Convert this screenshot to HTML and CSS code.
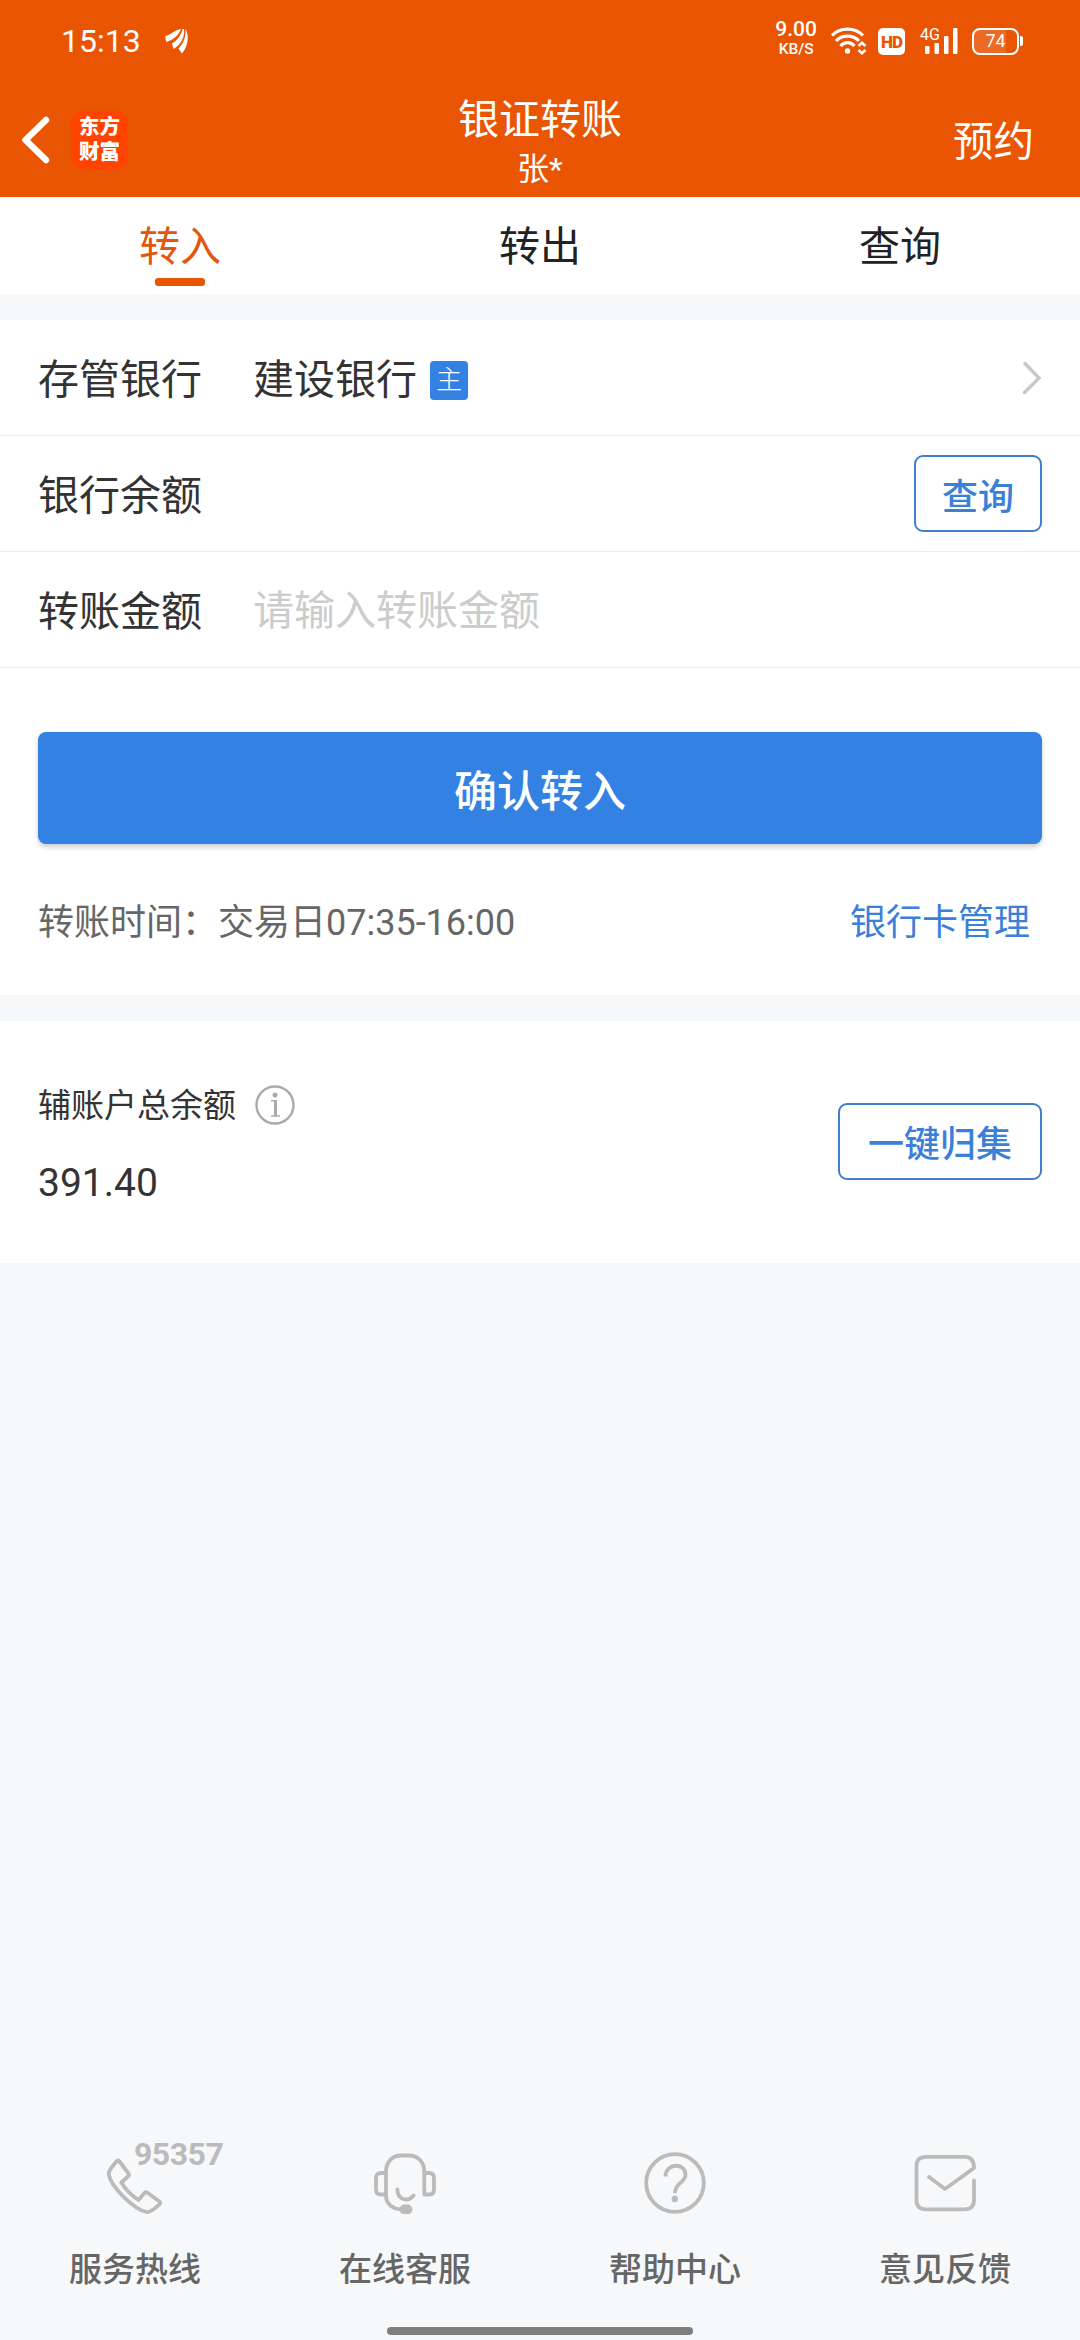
FILE: index.html
```html
<!DOCTYPE html>
<html lang="zh-CN">
<head>
  <meta charset="UTF-8">
  <meta name="viewport" content="width=device-width, initial-scale=1.0">
  <title>银证转账</title>
  <link rel="stylesheet" href="styles.css">
</head>
<body>
  <header>
    <!-- Status bar -->
    <div class="status">
      <span class="time">15:13</span>
      <svg class="app-mark" width="24" height="26" viewBox="0 0 24 26" fill="#fff">
        <path d="M0.500 8C6 7 10 1.500 16 1C14 7 8 12 1.500 14Q0 11 0.500 8Z"/>
        <path d="M7 15.500C13 12 16.500 6 17.500 1H19C20 9 16 17 8.500 21Z"/>
        <path d="M20.500 1C24.500 8 23 18 17 25.500L13.500 20.500C19 15 21 8 20.500 1Z"/>
      </svg>
      <div class="speed"><b>9.00</b><span>KB/S</span></div>
      <svg class="wifi" width="36" height="28" viewBox="0 0 36 28" fill="none" stroke="#fff" stroke-width="3.200">
        <path d="M1 8.500C9 0 24 0 32 8.500M5 14C11 7.500 22 7.500 28 14M9.500 19C13.500 14.500 19.500 14.500 23.500 19"/>
        <circle cx="16.500" cy="24" r="2.700" fill="#fff" stroke="none"/>
        <path d="M27.500 19L31 15.800L34.500 19M27.500 23L31 26.200L34.500 23" stroke-width="2.500"/>
      </svg>
      <span class="hd">HD</span>
      <div class="signal">
        <span>4G</span>
        <svg width="38" height="26" viewBox="0 0 38 26" fill="#fff">
          <rect x="5" y="18" width="4.500" height="8" rx="1"/>
          <rect x="14.500" y="15" width="4.500" height="11" rx="1"/>
          <rect x="24" y="8" width="4.500" height="18" rx="1"/>
          <rect x="33" y="0" width="4.500" height="26" rx="1"/>
        </svg>
      </div>
      <div class="battery"><span>74</span></div>
    </div>
    <!-- Title bar -->
    <div class="navbar">
      <div class="nav-left">
        <svg width="30" height="50" viewBox="0 0 30 50" fill="none" stroke="#fff" stroke-width="6.500" stroke-linejoin="round" stroke-linecap="round">
          <path d="M25 5L4.500 25L25 45"/>
        </svg>
        <div class="logo">东方<br>财富</div>
      </div>
      <div class="title">
        <h1>银证转账</h1>
        <p>张*</p>
      </div>
      <a class="reserve">预约</a>
    </div>
  </header>

  <nav class="tabs">
    <a class="active">转入</a>
    <a>转出</a>
    <a>查询</a>
  </nav>

  <!-- Transfer form -->
  <section class="form">
    <div class="row">
      <label>存管银行</label>
      <span class="bank">建设银行</span>
      <span class="tag">主</span>
      <svg class="arrow" width="20" height="34" viewBox="0 0 20 34" fill="none" stroke="#c7c7cc" stroke-width="3.500" stroke-linecap="round">
        <path d="M3 2.500L17 17L2.500 31.500"/>
      </svg>
    </div>
    <div class="row">
      <label>银行余额</label>
      <button class="outline">查询</button>
    </div>
    <div class="row">
      <label for="amount">转账金额</label>
      <input type="text" id="amount" placeholder="请输入转账金额">
    </div>
    <button class="confirm">确认转入</button>
    <div class="tips">
      <span>转账时间：交易日07:35-16:00</span>
      <a>银行卡管理</a>
    </div>
  </section>

  <!-- Sub account balance -->
  <section class="balance">
    <div>
      <div class="balance-name">
        <span>辅账户总余额</span>
        <svg width="40" height="40" viewBox="0 0 40 40" fill="none" stroke="#aaa" stroke-width="2.400">
          <circle cx="20" cy="20" r="18.500"/>
          <circle cx="20" cy="10" r="2.500" fill="#aaa" stroke="none"/>
          <path d="M16 15.800H21.500" stroke-width="1.500"/>
          <path d="M20.500 15V31" stroke-width="3"/>
          <path d="M16 31H25" stroke-width="1.500"/>
        </svg>
      </div>
      <div class="balance-num">391.40</div>
    </div>
    <button class="outline collect">一键归集</button>
  </section>

  <!-- Bottom service links -->
  <footer>
    <a>
      <span class="icon">
        <svg width="62" height="62" viewBox="0 0 62 62">
          <path d="M12.500 9.500Q14 7.500 15.500 9.500L24.500 21.500Q25.500 23 24.500 24L17.300 30.500C21.500 37.500 27 43 34.500 48L40.500 41Q41.700 39.700 43.500 40.800L55.500 49.500Q57.200 50.800 55.500 52.300C52 55.500 47 60.800 42.500 60C30 57.500 6 34 4.800 22C4.500 18 9 13.500 12.500 9.500Z"/>
        </svg>
        <b>95357</b>
      </span>
      服务热线
    </a>
    <a>
      <span class="icon">
        <svg width="62" height="62" viewBox="0 0 62 62">
          <path d="M12 21V44C12 51 18 57 27 57.500M12 44V20C12 10 18 3.500 27 3.500H35C44 3.500 50.300 10 50.300 20V42.500M12 21H7Q2 21 2 26V37.500Q2 42.500 7 42.500H12M50.300 21H55Q60 21 60 26V37.500Q60 42.500 55 42.500H50.300"/>
          <path d="M23.300 37.300C23.500 48 34 50.500 39.700 43.500"/>
          <rect x="27.500" y="54.500" width="9" height="6" rx="3" fill="#bbb"/>
        </svg>
      </span>
      在线客服
    </a>
    <a>
      <span class="icon">
        <svg width="62" height="62" viewBox="0 0 62 62">
          <circle cx="31" cy="31" r="28.800"/>
          <path stroke-linecap="butt" d="M21.500 24.500C21.500 10.500 41.500 10.500 41.500 22.500C41.500 31 31 30.500 31 41"/>
          <circle cx="30.800" cy="47" r="3.200" fill="#bbb" stroke="none"/>
        </svg>
      </span>
      帮助中心
    </a>
    <a>
      <span class="icon">
        <svg width="62" height="62" viewBox="0 0 62 62">
          <path d="M60 28.500V48Q60 57.300 50.500 57.300H12Q2.500 57.300 2.500 48V14Q2.500 4.800 12 4.800H50.500Q60 4.800 60 16L31 37L15 25"/>
        </svg>
      </span>
      意见反馈
    </a>
  </footer>
  <div class="home-bar"></div>
</body>
</html>
```
FILE: styles.css
```css
* {
  box-sizing: border-box;
}
body {
  margin: 0;
  width: 1080px;
  height: 2340px;
  display: flex;
  flex-direction: column;
  background-color: #f7f8fa;
  color: #333;
  font-family: Roboto, "Noto Sans CJK SC", sans-serif;
  font-size: 41px;
  overflow: hidden;
}
header {
  height: 197px;
  background-color: #ea5504;
  color: #fff;
}

/* status bar */
.status {
  height: 82px;
  padding: 0 58px 0 61px;
  display: flex;
  align-items: center;
}
.time {
  font-size: 32px;
  width: 104px;
}
.app-mark {
  margin-right: auto;
}
.speed {
  display: flex;
  flex-direction: column;
  align-items: center;
  font-size: 15.5px;
  line-height: 18px;
  font-weight: 500;
}
.speed b {
  margin-top: -5px;
  font-size: 21px;
  line-height: 21px;
  font-weight: 500;
}
.wifi {
  margin-left: 14px;
}
.hd {
  width: 27px;
  height: 27px;
  margin-left: 11px;
  border-radius: 5px;
  background-color: #fff;
  color: #ea5504;
  font-size: 17px;
  line-height: 28px;
  font-weight: 900;
  text-align: center;
  letter-spacing: -1px;
}
.signal {
  position: relative;
  height: 26px;
  margin-left: 15px;
}
.signal svg {
  display: block;
}
.signal span {
  position: absolute;
  left: 0;
  top: -2px;
  font-size: 16px;
  line-height: 18px;
}
.battery {
  position: relative;
  width: 47px;
  height: 27px;
  margin: 0 3px 0 14px;
  border: 2.5px solid #fff;
  border-radius: 8px;
  background: linear-gradient(to right, #ec6a26 32px, transparent 32px);
  font-size: 18px;
  line-height: 22px;
  text-align: center;
}
.battery::after {
  content: "";
  position: absolute;
  right: -6px;
  top: 6px;
  width: 3px;
  height: 10px;
  border-radius: 0 2px 2px 0;
  background-color: #fff;
}

/* title bar */
.navbar {
  height: 115px;
  padding: 0 46px 0 21px;
  display: grid;
  grid-template-columns: 300px 1fr 275px;
}
.nav-left {
  display: flex;
  align-items: center;
  height: 115px;
}
.logo {
  width: 57px;
  height: 58px;
  margin-left: 20px;
  padding-top: 4px;
  border-radius: 12px;
  background-color: #ff4400;
  font-size: 20.5px;
  line-height: 25px;
  font-weight: 900;
  text-align: center;
}
.title {
  text-align: center;
}
.title h1 {
  margin: 12px 0 0;
  font-size: 41px;
  line-height: 52px;
  font-weight: 400;
}
.title p {
  margin: 2px 0 0;
  font-size: 32px;
  line-height: 42px;
}
.reserve {
  font-size: 40.5px;
  line-height: 120px;
  text-align: right;
}

/* tabs */
.tabs {
  display: flex;
  height: 97px;
  margin-bottom: 26px;
  background-color: #fff;
  color: #222;
}
.tabs a {
  position: relative;
  flex: 1;
  line-height: 101px;
  text-align: center;
}
.tabs .active {
  color: #e2560d;
}
.tabs .active::after {
  content: "";
  position: absolute;
  left: 155px;
  bottom: 8px;
  width: 50px;
  height: 8px;
  border-radius: 3px;
  background-color: #ea5504;
}

/* form */
.form {
  height: 675px;
  margin-bottom: 26px;
  background-color: #fff;
}
.row {
  display: flex;
  align-items: center;
  height: 116px;
  padding: 0 38px;
  border-bottom: 1px solid #ebebeb;
}
.row label {
  width: 215px;
  padding-bottom: 4px;
}
.bank {
  padding-bottom: 4px;
}
.row input {
  flex: 1;
  padding: 2px 0 0;
  border: none;
  outline: none;
  font: inherit;
}
.row input::placeholder {
  color: #ccc;
}
.tag {
  width: 38px;
  height: 39px;
  margin: 6px 0 0 13px;
  border-radius: 4px;
  background-color: #3381e3;
  color: #fff;
  font-size: 26px;
  line-height: 38px;
  font-weight: 300;
  text-align: center;
}
.arrow {
  margin-left: auto;
}
button {
  font-family: inherit;
  font-weight: 500;
}
.outline {
  width: 128px;
  height: 77px;
  margin-left: auto;
  padding: 0;
  border: 2px solid #3f7fce;
  border-radius: 9px;
  background-color: #fff;
  color: #3b80d8;
  font-size: 36px;
}
.collect {
  width: 204px;
  margin-top: -2px;
}
.confirm {
  display: block;
  width: 1004px;
  height: 112px;
  margin: 64px auto 0;
  border: none;
  border-radius: 8px;
  background-color: #3381e3;
  box-shadow: 0 3px 5px rgba(0, 0, 0, 0.2);
  color: #fff;
  font-size: 43px;
}
.tips {
  display: flex;
  justify-content: space-between;
  margin-top: 51px;
  padding: 0 50px 0 38px;
  color: #666;
  font-size: 36px;
  line-height: 56px;
}
.tips a {
  color: #3b80d8;
}

/* balance */
.balance {
  display: flex;
  align-items: center;
  height: 242px;
  padding: 0 38px;
  background-color: #fff;
}
.balance-name {
  display: flex;
  align-items: center;
  gap: 19px;
  margin-top: 3px;
  font-size: 33px;
  line-height: 50px;
}
.balance-name span {
  padding-top: 2px;
}
.balance-num {
  margin-top: 26px;
  font-size: 39px;
  line-height: 52px;
}

/* bottom links */
footer {
  display: flex;
  height: 150px;
  margin-top: auto;
}
footer a {
  flex: 1;
  display: flex;
  flex-direction: column;
  align-items: center;
  color: #666;
  font-size: 33px;
  line-height: 48px;
  font-weight: 500;
}
.icon {
  position: relative;
  height: 94px;
}
.icon svg {
  display: block;
  fill: none;
  stroke: #bbb;
  stroke-width: 3.8;
  stroke-linecap: round;
  stroke-linejoin: round;
}
.icon b {
  position: absolute;
  left: 30px;
  top: -17px;
  color: #bbb;
  font-size: 32px;
  line-height: 38px;
  font-weight: 700;
  letter-spacing: -0.5px;
}
.home-bar {
  width: 306px;
  height: 8px;
  margin: 25px auto 5px;
  border-radius: 4px;
  background-color: #7e7e7e;
}
```
